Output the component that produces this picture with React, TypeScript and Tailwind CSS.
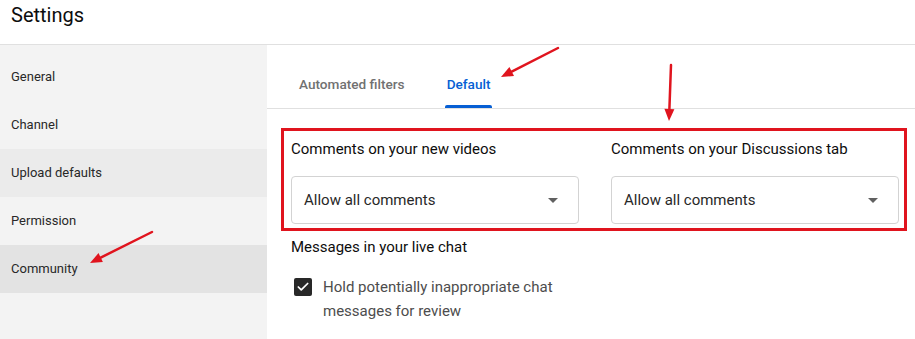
import { Check } from 'lucide-react'

const navItems = [
  { label: 'General', bg: '' },
  { label: 'Channel', bg: '' },
  { label: 'Upload defaults', bg: 'bg-[#ebebeb]' },
  { label: 'Permission', bg: '' },
  { label: 'Community', bg: 'bg-[#e3e3e3]' },
]

function SelectBox({ label }: { label: string }) {
  return (
    <div className="w-[288px]">
      <div className="text-[15px] leading-[20px] text-[#0d0d0d]">{label}</div>
      <div className="mt-[17px] flex h-[48px] items-center justify-between rounded-[4px] border border-[#d3d3d3] pl-[12px] pr-[20px]">
        <span className="text-[15px] text-[#282828]">Allow all comments</span>
        <svg width="10" height="5" viewBox="0 0 10 5">
          <polygon points="0,0 10,0 5,5" fill="#606060" />
        </svg>
      </div>
    </div>
  )
}

function Annotations() {
  return (
    <svg className="pointer-events-none absolute inset-0" width="915" height="339">
      <rect x="282.5" y="129.5" width="623" height="100" fill="none" stroke="#e0141e" strokeWidth="3" />
      <g stroke="#e0141e" strokeWidth="2.5" strokeLinecap="round">
        <line x1="558" y1="48" x2="511.7" y2="71.6" />
        <line x1="671" y1="65" x2="669.4" y2="109" />
        <line x1="152" y1="232" x2="100.7" y2="257.6" />
      </g>
      <g fill="#e0141e">
        <polygon points="501,77 514,76 509.4,67.1" />
        <polygon points="669,121 674.4,109.2 664.4,108.8" />
        <polygon points="90,263 102.9,262 98.5,253.1" />
      </g>
    </svg>
  )
}

export default function App() {
  return (
    <div
      className="relative flex h-[339px] w-[915px] flex-col overflow-hidden bg-white"
      style={{ fontFamily: 'Roboto, "Noto Sans", sans-serif' }}
    >
      <div className="h-[45px] shrink-0 border-b border-[#e0e0e0] pl-[11px] pt-[1px]">
        <h1 className="text-[20px] leading-[28px] text-[#0d0d0d]">Settings</h1>
      </div>

      <div className="flex min-h-0 flex-1">
        <aside className="w-[267px] shrink-0 bg-[#f3f3f3] pt-[8px]">
          {navItems.map((n) => (
            <div
              key={n.label}
              className={`flex h-[48px] items-center pl-[11px] text-[13px] text-[#282828] ${n.bg}`}
            >
              {n.label}
            </div>
          ))}
        </aside>

        <main className="flex-1">
          <div className="flex h-[64px] gap-[40px] border-b border-[#e0e0e0] pl-[32px]">
            <div className="flex flex-col justify-end">
              <span className="text-[13.6px] leading-[16px] font-medium text-[#717171]">Automated filters</span>
              <div className="mt-[13px] h-[3px]" />
            </div>
            <div className="flex flex-col justify-end">
              <span className="px-[2px] text-[13.6px] leading-[16px] font-medium text-[#065fd4]">Default</span>
              <div className="mt-[13px] h-[3px] rounded-t-[2px] bg-[#065fd4]" />
            </div>
          </div>

          <div className="pl-[24px] pt-[30px]">
            <div className="flex gap-[32px]">
              <SelectBox label="Comments on your new videos" />
              <SelectBox label="Comments on your Discussions tab" />
            </div>

            <div className="mt-[13px] text-[15px] leading-[20px] text-[#0d0d0d]">
              Messages in your live chat
            </div>

            <div className="mt-[18px] flex gap-[8px]">
              <div className="flex h-[24px] w-[24px] items-center justify-center">
                <div className="flex h-[18px] w-[18px] items-center justify-center rounded-[2px] bg-[#282828]">
                  <Check size={14} strokeWidth={3} color="#ffffff" />
                </div>
              </div>
              <div className="w-[240px] text-[15px] leading-[24px] text-[#4d4d4d]">
                Hold potentially inappropriate chat messages for review
              </div>
            </div>
          </div>
        </main>
      </div>

      <Annotations />
    </div>
  )
}
